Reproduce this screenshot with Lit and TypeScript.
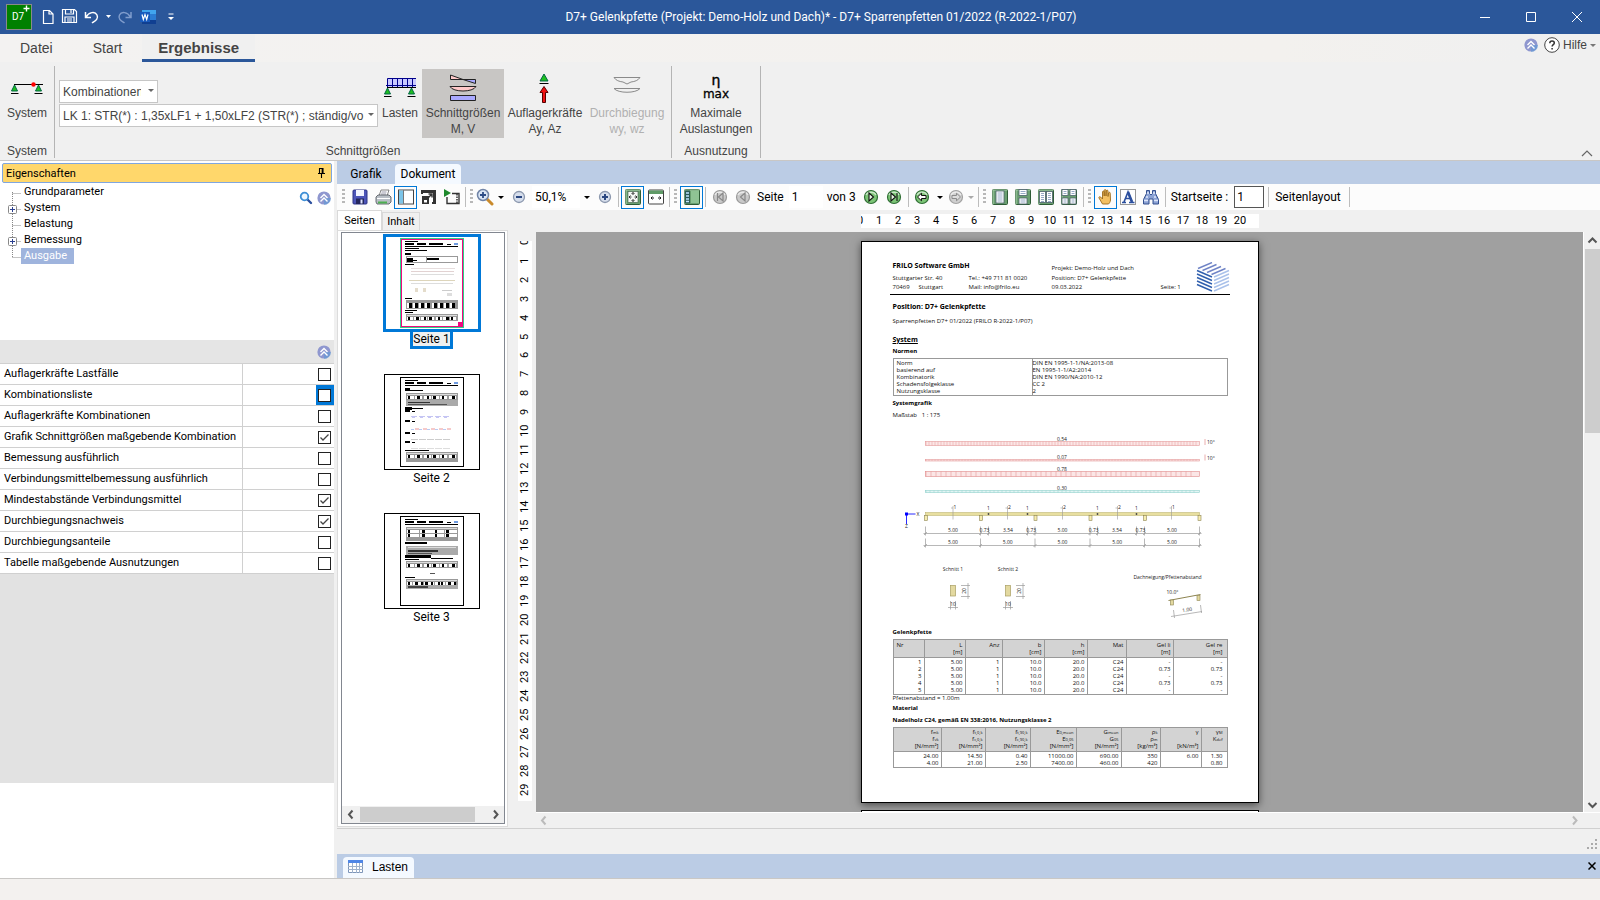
import { LitElement, html, svg, css, nothing } from "lit";
import { customElement } from "lit/decorators.js";
import { classMap } from "lit/directives/class-map.js";

const range = (n: number) => Array.from({ length: n }, (_, i) => i);

const support = (x: number, y: number) => svg`
  <path d="M${x} ${y}l-3 6h6z" fill="#1fc01f" stroke="#064" stroke-width="1"/>
  <path d="M${x - 4} ${y + 8.5}h8" stroke="#000"/>`;

const collapse = html`<svg class="ico" width="14" height="14" viewBox="0 0 14 14">
  <circle cx="7" cy="7" r="6.600" fill="#8f97cf"/><path d="M7 14A7 7 0 0 0 14 7L7 7z" fill="#5f9ad6" opacity=".6"/>
  <path d="M3.500 7L7 3.500 10.500 7M3.500 10.500L7 7l3.500 3.500" fill="none" stroke="#fff" stroke-width="1.400"/></svg>`;

const caret = (color = "#000") => html`<svg class="ico" width="6" height="3" viewBox="0 0 6 3"><path d="M0 0h6L3 3z" fill="${color}"/></svg>`;

const chev = (dir: string, color: string) => {
  const d: Record<string, string> = {
    left: "M7.500 1.500L4 5.500l3.500 4", right: "M4 1.500l3.500 4-3.500 4", up: "M1.500 7.500l4-4 4 4", down: "M1.500 4l4 4 4-4",
  };
  return html`<svg class="ico" width="11" height="11" viewBox="0 0 11 11"><path d="${d[dir]}" fill="none" stroke="${color}" stroke-width="2"/></svg>`;
};

const greenPage = (inner: unknown) => svg`
  <rect x="1.500" y="1.500" width="15" height="15" rx="1" fill="#6a9f70" stroke="#2e5c36"/>
  <path d="M2 16V2h14" fill="none" stroke="#a8d0aa"/>${inner}`;
const sheet = (x: number, y: number, w: number, h: number) => svg`
  <rect x="${x}" y="${y}" width="${w}" height="${h}" fill="#fff" stroke="#4a5f6a" stroke-width=".8"/>
  ${range(Math.floor((h - 1) / 2)).map((i) => svg`<path d="M${x + 1.5} ${y + 2 + i * 2}h${w - 3}" stroke="#7c93b8" stroke-width=".8"/>`)}`;
const ball = (fill: string, stroke: string, inner: unknown) => svg`
  <circle cx="9" cy="9" r="6.500" fill="${fill}" stroke="${stroke}" stroke-width="1.200"/>
  <path d="M4 7a5.500 4.500 0 0 1 10 0" fill="none" stroke="#fff" stroke-opacity=".6" stroke-width="1.500"/>${inner}`;

const glyphs: Record<string, unknown> = {
  save: svg`<rect x="2" y="2" width="14" height="14" rx="1" fill="#4d55b8" stroke="#2d3285"/><rect x="5" y="2" width="8" height="6" fill="#f2f4ff"/><rect x="5" y="10.500" width="8" height="5.500" fill="#23265c"/><rect x="9.500" y="11.500" width="2" height="4" fill="#dfe3ff"/>`,
  print: svg`<path d="M5 8l2-6h8l-2 6z" fill="#fff" stroke="#666" stroke-width=".8"/><path d="M7.500 4h5M7 6h5" stroke="#99a"/><path d="M2 9l2-2h11l2 2v5l-2 2H3l-1-2z" fill="#b9bfc6" stroke="#5b6168" stroke-width=".9"/><path d="M3 10.500h13" stroke="#fff"/><path d="M4 13.500h9v2H4z" fill="#4caf50"/>`,
  panel: svg`<rect x="1.500" y="2" width="15" height="14" fill="#fff" stroke="#444"/><rect x="2" y="2.500" width="4" height="13" fill="#7cc4e8"/><path d="M6.500 2v14" stroke="#777"/>`,
  expand: svg`<path d="M2 6V3h13v12h-3" fill="none" stroke="#333" stroke-width="2"/><path d="M1 2h15v3H1zM13 2h3v14h-3z" fill="#333"/><path d="M2 8h7v8H2z" fill="#333"/><path d="M4 12h3v2.500H4z" fill="#fff"/><path d="M7 11l5-5M8.500 6H12v3.500" fill="none" stroke="#333" stroke-width="1.400"/>`,
  film: svg`<path d="M1 1l7 4-7 4z" fill="#1f8a2d"/><path d="M9 5.500h7v10H4V9" fill="none" stroke="#333" stroke-width="1.400"/><path d="M14 6v10" stroke="#333" stroke-width="1.500" stroke-dasharray="1.500 1"/>`,
  zoom: svg`<path d="M10 10l6 6" stroke="#c98a2b" stroke-width="3" stroke-linecap="round"/><circle cx="7" cy="7" r="5.500" fill="#dbe6f5" stroke="#7184a6" stroke-width="1.500"/><path d="M7 4v6M4 7h6" stroke="#2d4c86" stroke-width="1.800"/>`,
  minus: svg`<circle cx="9" cy="9" r="5.500" fill="#d6deec" stroke="#8c98ae" stroke-width="1.300"/><path d="M6 9h6" stroke="#2b4780" stroke-width="2"/>`,
  plus: svg`<circle cx="9" cy="9" r="5.500" fill="#d6deec" stroke="#8c98ae" stroke-width="1.300"/><path d="M6 9h6M9 6v6" stroke="#2b4780" stroke-width="2"/>`,
  fitpage: greenPage(svg`<rect x="4" y="3.500" width="10" height="11" fill="#f4f8f4" stroke="#3c5c44" stroke-width=".6"/><path d="M9 4.500v2.500M9 11v2.500M5 9h2.500M10.500 9H13M7.500 6L9 4.500 10.500 6M7.500 12L9 13.500l1.500-1.500M6.500 7.500L5 9l1.500 1.500M11.500 7.500L13 9l-1.500 1.500" fill="none" stroke="#222" stroke-width=".9"/>`),
  fitwidth: svg`<rect x="1.500" y="2" width="15" height="14" rx="1" fill="#fff" stroke="#444"/><path d="M2 2.500h14v3.500H2z" fill="#5f9a66"/><path d="M4 10h3M11 10h3M5.500 8.500L4 10l1.500 1.500M12.500 8.500L14 10l-1.500 1.500" fill="none" stroke="#222"/>`,
  thumbs: greenPage(svg`<rect x="2" y="2.500" width="5" height="13" fill="#2b5a55"/><path d="M3 5h3M3 8h3M3 11h3M3 13.500h3" stroke="#bfe3ff" stroke-width="1.500"/><rect x="8" y="3" width="8" height="12" fill="#8fc394"/>`),
  first: ball("#c9c9c9", "#9a9a9a", svg`<path d="M6.500 5v8M12 5L7.500 9l4.500 4z" fill="none" stroke="#888" stroke-width="1.200"/>`),
  prev: ball("#c9c9c9", "#9a9a9a", svg`<path d="M11 5L6.500 9l4.500 4z" fill="none" stroke="#888" stroke-width="1.200"/>`),
  next: ball("#7cc576", "#2f6e34", svg`<path d="M7 5l4.500 4L7 13z" fill="#e9f8e6" stroke="#111" stroke-width="1.100"/>`),
  last: ball("#7cc576", "#2f6e34", svg`<path d="M6 5l4.500 4L6 13zM12 5v8" fill="#e9f8e6" stroke="#111" stroke-width="1.100"/>`),
  back: ball("#7cc576", "#2f6e34", svg`<path d="M4.500 9l4-3.800v2.300h4.500v3H8.500v2.300z" fill="#fff" stroke="#111" stroke-width="1"/>`),
  forward: ball("#cfcfcf", "#a2a2a2", svg`<path d="M13.500 9l-4-3.800v2.300H5v3h4.500v2.300z" fill="#ddd" stroke="#8c8c8c" stroke-width="1"/>`),
  single: greenPage(sheet(5, 3, 8, 12)),
  continuous: greenPage(svg`${sheet(5, 1.5, 8, 6)}${sheet(5, 10, 8, 6)}`),
  facing: greenPage(svg`${sheet(2.5, 3.5, 6, 11)}${sheet(9.5, 3.5, 6, 11)}`),
  grid: greenPage(svg`${sheet(2, 1.5, 6, 6)}${sheet(10, 1.5, 6, 6)}${sheet(2, 10, 6, 6)}${sheet(10, 10, 6, 6)}`),
  hand: svg`<path d="M5 16L1.500 10c-.5-1 .8-1.800 1.600-1L5 11V4c0-1.200 1.700-1.200 1.700 0v4V2.500c0-1.200 1.800-1.200 1.800 0V8l.3-5c0-1.200 1.700-1.200 1.700 0v5.500l.6-3.500c.2-1.100 1.800-.9 1.600.3L13 12c-.2 2-1 3-2 4z" transform="translate(1.500 0)" fill="#f3c063" stroke="#9a6a1c" stroke-width=".9"/>`,
  select: svg`<rect x="1.500" y="1.500" width="15" height="15" fill="#fff" stroke="#333" stroke-dasharray="1 1"/><path d="M3 14.500h4M10 14.500h5.500M5 14L9 4l4 10M6.500 10.500h5" fill="none" stroke="#2b4f9e" stroke-width="1.600"/><path d="M9 4l4 10" stroke="#2b4f9e" stroke-width="2.600"/>`,
  find: svg`<path d="M4.500 2.500h3v3L9 7l1.500-1.500v-3h3v3l3 6v4.500h-5.500v-5h-4v5H1.500v-4.500l3-6z" fill="#8ba2d4" stroke="#34508f"/><path d="M2 12.500h4M12 12.500h4M5 5h2M11 5h2M4 9h2M12 9h2" stroke="#dfe7fa" stroke-width="1.300"/>`,
};
const glyph = (name: string) => html`<svg class="ico" width="18" height="18" viewBox="0 0 18 18">${glyphs[name]}</svg>`;

const docStroke = "#999";

@customElement("report-drawing")
class ReportDrawing extends LitElement {
  static styles = css`
    :host { display: block; }
    svg { display: block; width: 100%; }
    text { font: 5px "Open Sans", sans-serif; fill: #222; text-anchor: middle; }
    .start { text-anchor: start; }
  `;

  private load(y: number, h: number, label: string, color: string, fill: string, step: number) {
    const n = Math.floor(274 / step);
    return svg`
      <text x="1062" y="${y - 1}">${label}</text>
      <rect x="925.500" y="${y}" width="274" height="${h}" fill="${fill}" stroke="${color}" stroke-width=".6"/>
      ${range(n).map((i) => svg`<path d="M${926 + i * step} ${y}v${h}" stroke="${color}" stroke-width=".5"/>`)}`;
  }

  private dims(y: number, marks: number[], labels: string[]) {
    return svg`
      <path d="M923.500 ${y}H1201.500" stroke="${docStroke}" stroke-width=".7"/>
      ${marks.map((x) => svg`<path d="M${x} ${y - 7}v9M${x - 1.5} ${y + 1.5}l3-3" stroke="${docStroke}" stroke-width=".7"/>`)}
      ${labels.map((t, i) => svg`<text x="${(marks[i] + marks[i + 1]) / 2}" y="${y - 2}">${t}</text>`)}`;
  }

  private section(x: number, n: number) {
    return svg`
      <text x="${x}" y="571">Schnitt ${n}</text>
      <rect x="${x - 2.5}" y="585.500" width="5" height="10.500" fill="#e3d9a0" stroke="#a89f62" stroke-width=".7"/>
      <path d="M${x + 15} 583v16M${x + 8} 585.500h9M${x + 8} 596.500h9M${x - 5} 607.500h10M${x - 2.5} 601v8.500M${x + 2.5} 601v8.500" stroke="${docStroke}" stroke-width=".7"/>
      <text transform="translate(${x + 13} 591) rotate(-90)">20</text>
      <text x="${x}" y="606">10</text>`;
  }

  render() {
    const piers = [925.5, 980.5, 1035, 1090, 1144.5, 1199];
    const hinges = [988.5, 1027.5, 1097.5, 1136.5];
    return html`<svg viewBox="862 420 396 205">
      ${this.load(441.5, 4, "0.54", "#e59a9a", "#fbe6e6", 3)}
      ${this.load(459.5, 1.5, "0.07", "#e59a9a", "#fbe6e6", 3)}
      ${this.load(471.5, 5, "0.78", "#e08a8a", "#fbe6e6", 5)}
      ${this.load(490.5, 2, "0.30", "#8fd0cc", "#e2f5f4", 4)}
      <path d="M1205 439v6M1205 454.500v6" stroke="#e59a9a" stroke-width=".8"/>
      <text class="start" x="1207" y="444">10°</text><text class="start" x="1207" y="460">10°</text>
      <path d="M906.500 524v-10h9" fill="none" stroke="#2a2aff"/><rect x="905" y="512.500" width="3" height="3" fill="#00f"/>
      <text x="918" y="516">X</text><text x="906.500" y="528">Z</text>
      <rect x="925.500" y="512.500" width="274" height="3" fill="#e8dfa0" stroke="#b5ab66" stroke-width=".5"/>
      ${piers.map((x) => svg`<rect x="${x - 1}" y="515.500" width="3" height="5" fill="#f7edb0" stroke="#8d8450" stroke-width=".6"/>`)}
      ${hinges.map((x) => svg`<circle cx="${x}" cy="514" r=".9" fill="#444"/><text x="${x}" y="510">1</text>`)}
      ${[[953, 1], [1007.5, 2], [1062.5, 2], [1117.5, 2], [1171.5, 1]].map(([x, n]) => svg`
        <path d="M${x} 506v13.500M${x - 2} 508h2" stroke="${docStroke}" stroke-width=".6"/><text x="${x + 2}" y="509">${n}</text>`)}
      ${this.dims(533.5, [925.5, 980.5, 988.5, 1027.5, 1035, 1090, 1097.5, 1136.5, 1144.5, 1199.5],
        ["5.00", "0.73", "3.54", "0.73", "5.00", "0.73", "3.54", "0.73", "5.00"])}
      ${this.dims(545.5, [925.5, 980.5, 1035, 1090, 1144.5, 1199.5], ["5.00", "5.00", "5.00", "5.00", "5.00"])}
      ${this.section(953, 1)}${this.section(1008, 2)}
      <text x="1167.500" y="578.500">Dachneigung/Pfettenabstand</text>
      <text x="1172.500" y="594">10.0°</text>
      <path d="M1168.500 600.500l32-6" stroke="#8d8450"/>
      <rect x="1170.500" y="600" width="3" height="5" fill="#e3d9a0" stroke="#8d8450" stroke-width=".6"/>
      <rect x="1197" y="595.500" width="3" height="5" fill="#e3d9a0" stroke="#8d8450" stroke-width=".6"/>
      <path d="M1171 616.500l31-5M1173.500 610l1 8M1200.500 605l1 8" stroke="${docStroke}" stroke-width=".7"/>
      <text transform="translate(1187.500 611.500) rotate(-9)">1.00</text>
    </svg>`;
  }
}

const normRows = [
  ["Norm", "DIN EN 1995-1-1/NA:2013-08"],
  ["basierend auf", "EN 1995-1-1/A2:2014"],
  ["Kombinatorik", "DIN EN 1990/NA:2010-12"],
  ["Schadensfolgeklasse", "CC 2"],
  ["Nutzungsklasse", "2"],
];
const purlinHead = [["Nr", ""], ["L", "[m]"], ["Anz", ""], ["b", "[cm]"], ["h", "[cm]"], ["Mat", ""], ["Gel li", "[m]"], ["Gel re", "[m]"]];
const purlinRows = range(5).map((i) => {
  const g = i % 2 ? "0.73" : "-";
  return [String(i + 1), "5.00", "1", "10.0", "20.0", "C24", g, g];
});
const materialHead: [string, string][][] = [
  [["f", "mk"], ["f", "vk"], ["[N/mm²]", ""]],
  [["f", "t,0,k"], ["f", "c,0,k"], ["[N/mm²]", ""]],
  [["f", "t,90,k"], ["f", "c,90,k"], ["[N/mm²]", ""]],
  [["E", "0,mean"], ["E", "0,05"], ["[N/mm²]", ""]],
  [["G", "mean"], ["G", "05"], ["[N/mm²]", ""]],
  [["ρ", "k"], ["ρ", "m"], ["[kg/m³]", ""]],
  [["γ", ""], ["\u00a0", ""], ["[kN/m³]", ""]],
  [["γ", "M"], ["K", "def"], ["\u00a0", ""]],
];
const materialRows = [
  ["24.00", "14.50", "0.40", "11000.00", "690.00", "350", "6.00", "1.30"],
  ["4.00", "21.00", "2.50", "7400.00", "460.00", "420", "", "0.80"],
];
const purlinCols = [30, 41, 37, 42, 43, 39, 47, 54];
const materialCols = [47, 44, 45, 46, 45, 39, 41, 26];

@customElement("report-page")
class ReportPage extends LitElement {
  static styles = css`
    :host {
      display: block; box-sizing: border-box; width: 398px; height: 562px; background: #fff; border: 1px solid #000;
      box-shadow: 0 2px 8px #0008; font: 6px/7px "Open Sans", sans-serif; color: #111; padding: 20px 0 0;
    }
    .head { display: grid; grid-template-columns: 26px 50px 83px 109px 1fr; grid-template-rows: 12px 9px 9px;
      align-items: center; margin: 0 28px; padding: 0 0 2px 3px; border-bottom: 1px solid #000; position: relative; }
    .firm { grid-column: 1 / 4; font-size: 7px; line-height: 8px; font-weight: 700; color: #000; align-self: start; }
    .street { grid-column: 1 / 3; }
    .c3 { grid-column: 3; } .c4 { grid-column: 4; } .wide { grid-column: 4 / 6; }
    .logo { position: absolute; right: 0; top: 0; width: 34px; height: 30px; }
    .body { margin: 0 31px; }
    .b { font-weight: 700; color: #000; line-height: 10px; }
    .line { line-height: 10px; margin-top: 2px; }
    .pos { margin-top: 7px; font-size: 7px; }
    .prog { margin-top: 4px; }
    .sys { margin-top: 8px; line-height: 11px; font-size: 7px; text-decoration: underline; }
    .after { margin-top: 1px; }
    .gap { margin-top: 2px; }
    table { width: 335px; table-layout: fixed; border-collapse: separate; border-spacing: 0; border: 1px solid #999; margin-top: 2px; }
    td, th { padding: 0 2px 0 0; text-align: right; font-weight: 400; border-left: 1px solid #999; height: 7px; white-space: nowrap; }
    td:first-child, th:first-child { border-left: 0; }
    td:last-child, th:last-child { padding-right: 4px; }
    th { background: #d3d3d3; border-bottom: 1px solid #999; padding: 2px 2px 1px 0; vertical-align: top; }
    tbody tr:first-child td { padding-top: 1px; }
    .norms td { text-align: left; }
    .norms td:first-child { padding-left: 3px; width: 133px; }
    th.left { text-align: left; padding-left: 3px; }
    sub { font-size: 4px; line-height: 0; vertical-align: baseline; }
    .mat th { padding-top: 1px; }
  `;

  private table(cls: string, cols: number[], head: unknown, rows: string[][]) {
    return html`<table class=${cls}>
      <colgroup>${cols.map((w) => html`<col width=${w}>`)}</colgroup>
      <thead><tr>${head}</tr></thead>
      <tbody>${rows.map((r) => html`<tr>${r.map((c) => html`<td>${c}</td>`)}</tr>`)}</tbody>
    </table>`;
  }

  render() {
    return html`
      <header class="head">
        <div class="firm">FRILO Software GmbH</div><div class="wide">Projekt: Demo-Holz und Dach</div>
        <div class="street">Stuttgarter Str. 40</div><div class="c3">Tel.: +49 711 81 0020</div><div class="wide">Position: D7+ Gelenkpfette</div>
        <div>70469</div><div>Stuttgart</div><div class="c3">Mail: info@frilo.eu</div><div class="c4">09.03.2022</div><div>Seite: 1</div>
        <svg class="logo" viewBox="0 0 34 30" fill="none" stroke-width="1.400">
          ${range(5).map((i) => svg`<path d="M1 ${8.5 + i * 3.5}l15 6.500" stroke="#2f5fae"/><path d="M18 ${15 + i * 3.5}l15-6.500" stroke="#a9c1ea"/>`)}
          ${range(4).map((i) => svg`<path d="M${2 + i * 4.5} ${6.5 + i * 2}l14-6" stroke="#6f83c6"/>`)}
        </svg>
      </header>
      <div class="body">
        <div class="b pos">Position: D7+ Gelenkpfette</div>
        <div class="line prog">Sparrenpfetten D7+ 01/2022 (FRILO R-2022-1/P07)</div>
        <div class="b sys">System</div>
        <div class="b after">Normen</div>
        <table class="norms"><tbody>${normRows.map((r) => html`<tr><td>${r[0]}</td><td>${r[1]}</td></tr>`)}</tbody></table>
        <div class="b gap">Systemgrafik</div>
        <div class="line">Maßstab &nbsp; 1 : 175</div>
      </div>
      <report-drawing></report-drawing>
      <div class="body">
        <div class="b gap">Gelenkpfette</div>
        ${this.table("purlins", purlinCols, purlinHead.map((h, i) => html`<th class=${i ? "" : "left"}>${h[0]}<br>${h[1]}</th>`), purlinRows)}
        <div>Pfettenabstand = 1.00m</div>
        <div class="b after">Material</div>
        <div class="b gap">Nadelholz C24, gemäß EN 338:2016, Nutzungsklasse 2</div>
        ${this.table("mat", materialCols, materialHead.map((h) => html`<th>${h.map(([a, s]) => html`<div>${a}${s ? html`<sub>${s}</sub>` : nothing}</div>`)}</th>`), materialRows)}
      </div>`;
  }
}

type Mark = [number, number, number, number, string];
const k = "#000", g = "#999";
const header: Mark[] = [
  [4, 2, 13, 1, k], [4, 4, 9, 2, k], [16, 4, 9, 2, k], [28, 4, 14, 2, k], [46, 5, 4, 1, k], [53, 4, 4, 2, "#6f9be0"], [4, 7, 53, 1, k],
];
const band = (y: number, h: number, rows: number, cells: number): Mark[] => [
  [5, y, 52, h, g], [6, y + 1, 50, 1, "#ddd"],
  ...range(rows).flatMap((r) => range(cells).flatMap((c): Mark[] => [
    [6 + Math.round((c * 50) / cells), y + 3 + r * 4, Math.round(50 / cells) - 1, 3, "#fff"],
    [7 + Math.round((c * 50) / cells) + (c % 3), y + 3 + r * 4, c % 2 ? 3 : 2, 3, k],
  ])),
];
const pageMarks: Mark[][] = [
  [...header, [4, 9, 14, 1, k], [4, 11, 22, 1, k], [4, 14, 6, 2, k], [5, 17, 52, 7, g], [6, 18, 50, 5, "#fff"], [6, 19, 6, 4, k], [12, 21, 4, 1, k], [25, 18, 1, 5, g], [26, 19, 12, 2, k],
    [4, 25, 9, 1, k], [10, 29, 44, 1, "#e6dddd"], [10, 32, 43, 1, "#e2d2d2"], [10, 35, 43, 1, "#ddd"], [8, 41, 46, 1, "#ddd5bb"], [10, 44, 42, 1, "#ddd"],
    [14, 49, 3, 4, "#e4dccb"], [22, 49, 3, 4, "#e4dccb"], [41, 51, 10, 1, "#ccc"], [46, 54, 5, 3, "#ddd"],
    [4, 59, 7, 1, k], [5, 61, 52, 9, g], ...range(8).flatMap((i): Mark[] => [[6 + i * 6 + (i > 3 ? 1 : 0), 64, 5, 5, "#fff"], [8 + i * 6 + (i > 3 ? 1 : 0), 64, 3, 5, k]]),
    [4, 71, 12, 1, k], [4, 73, 8, 1, k], ...band(75, 7, 1, 7)],
  [...header, [4, 10, 5, 2, k], [4, 12, 18, 1, k], ...band(15, 7, 1, 6), [5, 22, 52, 6, "#aaa"], [7, 24, 22, 1, "#333"], [7, 26, 39, 1, "#555"],
    ...[32, 42, 54, 63].map((y): Mark => [4, y, 5, 2, k]), ...[33, 43, 55, 64].map((y): Mark => [11, y, 3, 1, k]), [4, 29, 7, 3, k], [4, 30, 18, 1, k],
    ...range(5).flatMap((i): Mark[] => [[10 + i * 8, 38, 6, 1, "#c5c5f3"], [11 + i * 8, 39, 3, 1, "#c5c5f3"], [10 + i * 8, 51, 3, 1, "#b9c9f3"], [14 + i * 8, 50, 4, 2, "#f6caca"], [10 + i * 8, 61, 7, 1, "#ccc"], [10 + i * 8, 70, 7, 1, "#ddd"]]),
    [4, 72, 24, 1, k], ...band(74, 10, 1, 6)],
  [...header, ...band(10, 14, 2, 4), [4, 25, 22, 2, k], [5, 29, 52, 9, "#aaa"], [7, 30, 48, 1, "#ddd"], [7, 33, 30, 2, "#333"], [7, 36, 24, 1, "#555"], [4, 38, 26, 3, k], [30, 41, 22, 1, k], [4, 42, 14, 1, k],
    ...band(44, 7, 1, 6), [29, 56, 5, 1, "#555"], [4, 60, 10, 1, k], ...band(62, 6, 1, 9), [5, 68, 52, 4, "#aaa"], [7, 69, 20, 2, "#444"]],
];

const treeItems = [
  { label: "Grundparameter" }, { label: "System", open: true }, { label: "Belastung" }, { label: "Bemessung", open: true }, { label: "Ausgabe", selected: true },
] as { label: string; open?: boolean; selected?: boolean }[];

const options = [
  { label: "Auflagerkräfte Lastfälle" }, { label: "Kombinationsliste", focus: true }, { label: "Auflagerkräfte Kombinationen" },
  { label: "Grafik Schnittgrößen maßgebende Kombination", on: true }, { label: "Bemessung ausführlich" },
  { label: "Verbindungsmittelbemessung ausführlich" }, { label: "Mindestabstände Verbindungsmittel", on: true },
  { label: "Durchbiegungsnachweis", on: true }, { label: "Durchbiegungsanteile" }, { label: "Tabelle maßgebende Ausnutzungen" },
] as { label: string; on?: boolean; focus?: boolean }[];

@customElement("app-root")
class AppRoot extends LitElement {
  static styles = css`
    :host { display: flex; flex-direction: column; height: 100vh; overflow: hidden; background: #f0f0f0; color: #000;
      font: 12px "Liberation Sans", Arial, sans-serif; }
    * { box-sizing: border-box; }
    button { font: inherit; color: inherit; border: 0; background: none; padding: 0; margin: 0; }
    .ico { display: block; flex: none; }
    .ui { font-family: Roboto, "Open Sans", sans-serif; }

    .title { flex: none; display: flex; align-items: center; height: 34px; background: #2b579a; color: #fff; position: relative; }
    .quick { display: flex; align-items: center; padding-left: 6px; gap: 1px; }
    .quick svg { display: block; }
    .caption { position: absolute; left: 0; right: 0; text-align: center; padding-left: 42px; pointer-events: none; font-size: 12px; }
    .window { margin-left: auto; display: flex; }
    .window button { width: 46px; height: 34px; display: grid; place-items: center; }

    .tabs { flex: none; display: flex; height: 28px; background: linear-gradient(90deg, #f3f2f1, #f3f1ee 80%, #f0f0f0 95%); color: #444; font-size: 14px; }
    .tabs button { padding: 0 20px; height: 28px; }
    .tabs .active { font-weight: 700; font-size: 15px; padding: 2px 16px 0; border-bottom: 3px solid #2b579a; background: #f0f0f0; }
    .help { margin-left: auto; display: flex; align-items: center; gap: 6px; font-size: 12px; padding: 0 4px 6px 0; }
    .tabs .help button { display: flex; align-items: center; gap: 3px; padding: 0; height: 20px; }

    .ribbon { flex: none; display: flex; padding-top: 4px; height: 99px; border-bottom: 1px solid #c9c7c5; color: #444; }
    .group { display: flex; flex-direction: column; gap: 6px; padding-top: 3px; height: 92px; border-right: 1px solid #b4b4b4; }
    .group .body { display: flex; flex: none; height: 69px; }
    .group .name { text-align: center; line-height: 14px; }
    .group .wide { padding-right: 3px; }
    .cmd { display: flex; flex-direction: column; align-items: center; padding-top: 3px; line-height: 16px; white-space: nowrap; }
    .cmd svg { height: 32px; width: 32px; margin-bottom: 1px; display: block; }
    .cmd.pressed { background: #c8c6c4; }
    .cmd:disabled { color: #b1b1b1; }
    .w54 { width: 54px; } .w44 { width: 44px; } .w82 { width: 82px; } .w88 { width: 88px; }
    .combos { display: flex; flex-direction: column; align-items: flex-start; gap: 1px; padding: 11px 0 0 4px; }
    .combo { position: relative; width: 319px; height: 23px; }
    .combo.small { width: 99px; }
    .combo select { appearance: none; width: 100%; height: 100%; border: 1px solid #c6c6c6; border-radius: 0; background: #fff; color: #444; font: inherit; padding: 0 8px 0 3px; }
    .combo.small select { padding-right: 16px; }
    .combo svg { position: absolute; right: 4px; top: 9px; pointer-events: none; }
    .fold { margin: auto 7px 3px auto; }

    .work { flex: 1; display: flex; min-height: 0; gap: 3px; }
    .side { width: 334px; flex: none; display: flex; flex-direction: column; background: #fff; font-size: 11px; font-family: Roboto, sans-serif; }
    .panelhead { display: flex; align-items: center; justify-content: space-between; height: 20px; margin: 2px 2px 1px; padding: 0 5px 0 3px;
      border: 1px solid #7fa6e0; border-radius: 2px; background: #ffd76b; }
    .treebox { display: flex; justify-content: space-between; height: 156px; padding: 0 3px 0 8px; }
    .treebox .tools { display: flex; gap: 4px; padding-top: 7px; }
    ul { list-style: none; margin: 0; padding: 0; }
    .tree li { display: flex; align-items: center; height: 16px; }
    .tree li svg { display: block; flex: none; }
    .tree span { line-height: 16px; padding: 0 7px 0 3px; }
    .tree .sel span { background: #9fb4dd; color: #fff; }
    .strip { height: 23px; background: #e5e5e5; display: flex; align-items: center; justify-content: flex-end; padding-right: 3px; }
    .options { border-top: 1px solid #d0d0d0; }
    .options li { display: flex; height: 21px; border-bottom: 1px solid #d0d0d0; }
    .options label { width: 243px; padding-left: 4px; line-height: 20px; border-right: 1px solid #d0d0d0; white-space: nowrap; }
    .options .cell { margin-left: auto; width: 18px; display: flex; align-items: center; padding-left: 2px; }
    .options .focus { background: #0078d7; }
    .options input { appearance: none; width: 13px; height: 13px; margin: 0; border: 1px solid #222; background: #fff; }
    .options input:checked { background: #fff url("data:image/svg+xml,%3Csvg xmlns='http://www.w3.org/2000/svg' viewBox='0 0 11 11'%3E%3Cpath d='M1.500 5.500L4 8l5.500-5.500' fill='none' stroke='%23444' stroke-width='1.300'/%3E%3C/svg%3E"); }
    .filler { flex: 0 0 209px; background: #e2e2e2; }

    .main { flex: 1; min-width: 0; display: flex; flex-direction: column; }
    .doctabs { flex: none; display: flex; align-items: flex-end; height: 23px; background: #bbcce5; }
    .doctabs button { height: 20px; width: 58px; line-height: 20px; }
    .doctabs .active { width: 66px; background: #f4f9ff; border-radius: 4px 4px 0 0; }
    .bar { flex: none; display: flex; align-items: center; height: 26px; background: #fcfcfc; padding-left: 3px; white-space: nowrap; }
    .bar button { width: 23px; height: 23px; display: grid; place-items: center; flex: none; }
    .bar .on { border: 1px solid #0078d7; }
    .bar .zoomer { width: 18px; }
    .bar .snug { width: 19px; }
    .bar .drop { width: 13px; }
    .bar .tight { width: 10px; }
    .grip { width: 3px; height: 16px; margin: 0 3px 0 2px; background: repeating-linear-gradient(#b8b8b8 0 2px, transparent 2px 4px); }
    .sep { width: 1px; height: 20px; margin: 0 2px; background: #bdbdbd; }
    .bar input { border: 0; background: #fff; height: 22px; padding: 0 3px; font: inherit; color: #000; outline: 0; }
    .bar .zoomval { width: 48px; margin-left: 2px; }
    .bar .pageno { width: 34px; margin: 0 4px 0 5px; }
    .bar .startno { width: 30px; border: 1px solid #555; padding: 0 2px; margin: 0 2px 0 6px; }
    .bar label { padding-left: 3px; }
    .bar .total { padding-right: 4px; }
    .bar .layout { width: auto; padding: 0 6px 0 4px; }

    .doc { flex: 1; display: flex; min-height: 0; border-bottom: 1px solid #d0d0d0; }
    .pages { width: 171px; flex: none; display: flex; flex-direction: column; padding-bottom: 1px; }
    .minitabs { display: flex; align-items: flex-end; height: 20px; font-size: 11px; font-family: Roboto, sans-serif; }
    .minitabs button { height: 18px; width: 38px; border: 1px solid #d9d9d9; border-bottom: 0; background: #f0f0f0; }
    .minitabs .active { height: 20px; width: 45px; background: #fff; }
    .frame { flex: 1; min-height: 0; background: #fff; border: 1px solid #dcdcdc; padding: 1px 2px 2px 3px; display: flex; }
    .list { flex: 1; border: 1px solid #828790; display: flex; flex-direction: column; min-height: 0; min-width: 0; }
    .thumbs { flex: 1; overflow: hidden; padding: 1px 0 0 17px; display: flex; flex-direction: column; align-items: center; gap: 25px; }
    .thumb { display: flex; flex-direction: column; align-items: center; height: 114px; width: 98px; font-size: 12px; font-family: Roboto, sans-serif; }
    .thumb .edge { width: 96px; height: 96px; margin-top: 1px; border: 1px solid #000; display: grid; place-items: center; flex: none; }
    .thumb svg { display: block; outline: 1px solid #000; }
    .thumb .no { line-height: 16px; white-space: nowrap; }
    .thumb.cur .edge { width: 98px; height: 98px; margin: 0; border: 3px solid #0078d7; }
    .thumb.cur .no { border: 3px solid #0078d7; background: #f0f0f0; margin-top: -3px; line-height: 14px; }
    .thumb.cur svg { outline-color: #2fd08a; }
    .hscroll { flex: none; height: 17px; display: flex; align-items: center; background: #f0f0f0; padding: 0 3px; justify-content: space-between; }
    .hscroll .knob { width: 115px; height: 15px; background: #cdcdcd; margin-right: 12px; }
    .vruler { flex: none; width: 14px; margin: 31px 4px 27px 10px; background: #fff; overflow: hidden; font-size: 11px; }
    .vruler div { display: flex; flex-direction: column; height: 567px; margin-top: -9px; }
    .vruler span { flex: 1; writing-mode: vertical-rl; transform: rotate(180deg); text-align: center; line-height: 14px; }
    .view { flex: 1; min-width: 0; display: flex; flex-direction: column; }
    .hruler { flex: none; margin: 4px 17px 4px 0; height: 14px; display: flex; justify-content: center; font-size: 11px; }
    .hruler .win { width: 398px; background: #fff; overflow: hidden; }
    .hruler .win div { display: flex; margin-left: -10px; }
    .hruler span { flex: none; width: 19px; text-align: center; line-height: 14px; }
    .rule { font-family: Roboto, sans-serif; }
    .canvasrow { flex: 1; display: flex; min-height: 0; }
    .canvas { flex: 1; background: #a0a0a0; overflow: hidden; display: flex; flex-direction: column; align-items: center; gap: 7px; padding-top: 9px; }
    .canvas > * { flex: none; }
    .nextpage { width: 398px; height: 20px; background: #fff; border: 1px solid #000; }
    .vscroll { width: 17px; display: flex; flex-direction: column; align-items: center; border-left: 1px solid #fff; padding: 3px 0 2px; }
    .vscroll .knob { width: 15px; height: 184px; background: #cdcdcd; margin: 3px 0 auto; }
    .viewfoot { flex: none; height: 16px; display: flex; align-items: center; justify-content: space-between; border-top: 1px solid #fff; padding: 0 20px 0 2px; }
    .below { flex: none; height: 25px; display: flex; align-items: flex-end; justify-content: flex-end; padding: 4px 2px; }
    .bottomtabs { flex: none; height: 24px; background: #bbcce5; display: flex; align-items: flex-end; justify-content: space-between; padding: 0 4px 0 6px; }
    .bottomtabs .tab { height: 21px; width: 71px; background: #f4f9ff; border-radius: 4px 4px 0 0; display: flex; align-items: center; gap: 9px; padding: 0 0 2px 5px; }
    .bottomtabs .close { height: 24px; }
    .status { flex: none; height: 22px; background: #f3f1ef; border-top: 1px solid #c9c7c5; }
  `;

  private tool(name: string, label: string, cls = "") {
    return html`<button class=${cls} aria-label=${label}>${glyph(name)}</button>`;
  }

  private titleBar() {
    return html`<header class="title ui">
      <div class="quick">
        <svg width="26" height="26" viewBox="0 0 26 26"><rect x=".5" y=".5" width="25" height="25" fill="#008000" stroke="#8a8a8a"/><path d="M17.500 4.500h6M20.500 1.500v6" stroke="#fff" stroke-width="1.400"/><text x="6" y="16" fill="#fff" font-size="10" font-family="Roboto">D7</text></svg>
        <svg width="134" height="18" viewBox="33 8 134 18" fill="none" stroke="#fff" stroke-width="1.200">
          <path d="M43.500 10.500h6l3.500 3.500v9.500h-9.500zM49 10.500V14h4"/>
          <path d="M62.500 9.500h12l2 2v11h-14zM65.500 9.500v4.500h8V9.500M65 22.500V17h9v5.500M67 19h5M67 21h5M71 10v3"/>
          <path d="M85.500 12v5.500H91M86 17c3-5 9-6 11-2s-2 6-5 8" stroke-width="1.500"/>
          <path d="M106 15h5l-2.500 3z" fill="#fff" stroke="none"/>
          <path d="M131 12v5.500h-5.500M130.500 17c-3-5-9-6-11-2s2 6 5 8" stroke="#7f9ccc" stroke-width="1.500"/>
          <path d="M142 10h14v14h-14z" fill="#2b7cd3" stroke="none"/><path d="M142 10h14v4h-14z" fill="#41a5ee" stroke="none"/><path d="M142 20h14v4h-14z" fill="#103f91" stroke="none"/><rect x="140" y="12" width="10" height="10" fill="#185abd" stroke="none"/><path d="M142 14.500l1.300 5 1.700-5 1.700 5 1.300-5"/>
        </svg>
        <svg width="6" height="8" viewBox="0 0 6 8"><path d="M.5 1h5" stroke="#fff"/><path d="M0 4h6L3 7z" fill="#fff"/></svg>
      </div>
      <div class="caption">D7+ Gelenkpfette (Projekt: Demo-Holz und Dach)* - D7+ Sparrenpfetten 01/2022 (R-2022-1/P07)</div>
      <div class="window">
        <button aria-label="Minimieren"><svg width="10" height="10"><path d="M0 5.500h10" stroke="#fff"/></svg></button>
        <button aria-label="Maximieren"><svg width="10" height="10"><path d="M.5 .5h9v9h-9z" fill="none" stroke="#fff"/></svg></button>
        <button aria-label="Schließen"><svg width="10" height="10"><path d="M0 0l10 10M10 0L0 10" stroke="#fff"/></svg></button>
      </div>
    </header>
    <nav class="tabs">
      <button>Datei</button><button>Start</button><button class="active">Ergebnisse</button>
      <div class="help"><button aria-label="Einklappen">${collapse}</button>
        <button><svg width="16" height="16" viewBox="0 0 16 16"><circle cx="8" cy="8" r="7.300" fill="#fff" stroke="#444"/><path d="M5.800 6.200c0-3 4.500-2.800 4.500-.2 0 1.600-2.200 1.800-2.200 3.500M8.100 11v1.500" fill="none" stroke="#333" stroke-width="1.500"/></svg>Hilfe ${caret("#777")}</button>
      </div>
    </nav>`;
  }

  private ribbon() {
    return html`<section class="ribbon">
      <div class="group">
        <div class="body"><button class="cmd w54"><svg viewBox="0 0 32 32"><path d="M3 12.500h29" stroke="#000"/>${support(3.5, 13)}${support(27.5, 13)}<circle cx="22.500" cy="12.500" r="2.200" fill="red"/></svg>System</button></div>
        <div class="name">System</div>
      </div>
      <div class="group">
        <div class="body wide">
          <div class="combos">
            <div class="combo small"><select aria-label="Auswahlart"><option>Kombinationen</option></select>${caret("#666")}</div>
            <div class="combo"><select aria-label="Lastkombination"><option>LK 1: STR(*) : 1,35xLF1 + 1,50xLF2 (STR(*) ; ständig/vo</option></select>${caret("#666")}</div>
          </div>
          <button class="cmd w44"><svg viewBox="0 0 32 32"><rect x="3" y="6.500" width="29" height="9" fill="#c9c9ff"/><path d="M3.500 15V6.500H32M8.500 7v8M13.500 7v8M18.500 7v8M23.500 7v8M28.500 7v8M2 13.500h30" stroke="#00008b" fill="none"/><path d="M3 15.500h29" stroke="#000"/>${support(3.5, 16)}${support(27.5, 16)}</svg>Lasten</button>
          <button class="cmd pressed w82"><svg viewBox="0 0 32 32" stroke="#222"><path d="M3.500 7.500V3L16 7.500z" fill="#ffc9c9"/><path d="M16 7.500h12.500v4z" fill="#a9a9ff"/><path d="M3 14.500h26c-3 6-23 6-26 0z" fill="#ffc9c9"/><path d="M3.500 23.500h25v5h-25z" fill="#a9a9ff"/></svg>Schnittgrößen<br>M, V</button>
          <button class="cmd w82"><svg viewBox="0 0 32 32"><path d="M15 2l-4 7h8z" fill="#1fc01f" stroke="#064"/><path d="M10.500 11.500h9" stroke="#000"/><path d="M15 14.500l-4 6h2.500v10h3v-10H19z" fill="#f01010" stroke="#500"/></svg>Auflagerkräfte<br>Ay, Az</button>
          <button class="cmd w82" disabled><svg viewBox="0 0 32 32" fill="none" stroke="#8a8a8a"><path d="M3 5.500h26c-2 3-5 4-9 4.500l-4 2-4-2C8 9.500 5 8.500 3 5.500zM3 16.500h26c-4 5-22 5-26 0z"/></svg>Durchbiegung<br>wy, wz</button>
        </div>
        <div class="name">Schnittgrößen</div>
      </div>
      <div class="group">
        <div class="body"><button class="cmd w88"><svg viewBox="0 0 32 32"><text x="16" y="13" text-anchor="middle" font-size="14" font-family="DejaVu Sans" stroke="#000" stroke-width=".4">η</text><text x="16" y="26" text-anchor="middle" font-size="12" font-family="DejaVu Sans" stroke="#000" stroke-width=".3">max</text></svg>Maximale<br>Auslastungen</button></div>
        <div class="name">Ausnutzung</div>
      </div>
      <button class="fold" aria-label="Menüband einklappen"><svg class="ico" width="12" height="7"><path d="M1 6l5-5 5 5" fill="none" stroke="#666" stroke-width="1.200"/></svg></button>
    </section>`;
  }

  private side() {
    return html`<aside class="side">
      <div class="panelhead">Eigenschaften
        <svg width="9" height="10" viewBox="0 0 9 10"><path d="M2.500 0v5.500M2 .5h4.500M6 0v5.500M1 5.500h7M4.500 6v4M5.200 0v6" stroke="#000" stroke-width="1.100" fill="none"/></svg></div>
      <div class="treebox">
        <ul class="tree">${treeItems.map((t, i) => html`<li class=${classMap({ sel: !!t.selected })}>
          <svg width="13" height="16" viewBox="0 0 13 16" fill="none">
            <path d="M4.500 ${i ? 0 : 8}V${i === 4 ? 9 : 16}M4.500 9.500H13" stroke="#888" stroke-dasharray="1 1"/>
            ${t.open ? svg`<rect x=".5" y="5.500" width="8" height="8" rx="1" fill="#fff" stroke="#888"/><path d="M2 9.500h5M4.500 7v5" stroke="#2b3f8f"/>` : nothing}
          </svg><span>${t.label}</span></li>`)}</ul>
        <div class="tools"><svg width="14" height="14" viewBox="0 0 14 14"><path d="M8 8l4 4" stroke="#2b4f9e" stroke-width="2.400" stroke-linecap="round"/><circle cx="5.500" cy="5.500" r="3.800" fill="#eef7ff" stroke="#3d8fd6" stroke-width="1.800"/></svg>${collapse}</div>
      </div>
      <div class="strip">${collapse}</div>
      <ul class="options">${options.map((o, i) => html`<li><label for="o${i}">${o.label}</label>
        <div class=${classMap({ cell: true, focus: !!o.focus })}><input id="o${i}" type="checkbox" .checked=${!!o.on}></div></li>`)}</ul>
      <div class="filler"></div>
    </aside>`;
  }

  private toolbar() {
    const grip = html`<div class="grip"></div>`, sep = html`<div class="sep"></div>`;
    const drop = (label: string, c = "#000", cls = "drop") => html`<button class=${cls} aria-label=${label}>${caret(c)}</button>`;
    return html`<div class="bar ui">
      ${grip}${this.tool("save", "Speichern")}${this.tool("print", "Drucken")}${this.tool("panel", "Seitenleiste", "on")}${this.tool("expand", "Vollbild")}${this.tool("film", "Export")}
      ${sep}${grip}${this.tool("zoom", "Zoom", "zoomer")}${drop("Zoomwerkzeuge")}${this.tool("minus", "Verkleinern")}
      <input class="zoomval" aria-label="Zoomfaktor" value="50,1%">${drop("Zoomstufen")}${this.tool("plus", "Vergrößern")}
      ${sep}${this.tool("fitpage", "Ganze Seite", "on")}${this.tool("fitwidth", "Seitenbreite")}
      ${sep}${grip}${this.tool("thumbs", "Miniaturen", "on")}${sep}${this.tool("first", "Erste Seite")}${this.tool("prev", "Vorherige Seite")}
      <label for="pg">Seite</label><input id="pg" class="pageno" value="1"><span class="total">von 3</span>
      ${this.tool("next", "Nächste Seite")}${this.tool("last", "Letzte Seite")}${sep}${this.tool("back", "Zurück")}${drop("Verlauf zurück")}${this.tool("forward", "Vor", "snug")}${drop("Verlauf vor", "#aaa", "tight")}
      ${sep}${grip}${this.tool("single", "Einzelseite")}${this.tool("continuous", "Fortlaufend")}${this.tool("facing", "Doppelseite")}${this.tool("grid", "Doppelseite fortlaufend")}
      ${sep}${grip}${this.tool("hand", "Verschieben", "on")}${this.tool("select", "Textauswahl")}${this.tool("find", "Suchen")}
      ${sep}<label for="st">Startseite :</label><input id="st" class="startno" value="1">${sep}<button class="layout">Seitenlayout</button>${sep}
    </div>`;
  }

  private thumb(i: number) {
    return html`<div class=${classMap({ thumb: true, cur: i === 0 })}>
      <div class="edge"><svg width="62" height="88" viewBox="0 0 62 88" shape-rendering="crispEdges">
        ${pageMarks[i].map(([x, y, w, h, c]) => svg`<rect x="${x}" y="${y}" width="${w}" height="${h}" fill="${c}"/>`)}
        ${i === 0 ? svg`<rect x=".5" y=".5" width="61" height="87" fill="none" stroke="#f0087f"/><rect x="57" y="83" width="5" height="5" fill="#f0087f"/>` : nothing}
      </svg></div><div class="no">Seite ${i + 1}</div></div>`;
  }

  render() {
    return html`${this.titleBar()}${this.ribbon()}
      <div class="work">
        ${this.side()}
        <main class="main">
          <nav class="doctabs ui"><button>Grafik</button><button class="active">Dokument</button></nav>
          ${this.toolbar()}
          <div class="doc">
            <div class="pages">
              <div class="minitabs"><button class="active">Seiten</button><button>Inhalt</button></div>
              <div class="frame"><div class="list">
                <div class="thumbs">${range(3).map((i) => this.thumb(i))}</div>
                <div class="hscroll">${chev("left", "#555")}<div class="knob"></div>${chev("right", "#555")}</div>
              </div></div>
            </div>
            <div class="vruler rule"><div>${range(30).map((n) => html`<span>${n}</span>`)}</div></div>
            <div class="view">
              <div class="hruler rule"><div class="win"><div>${range(21).map((n) => html`<span>${n}</span>`)}</div></div></div>
              <div class="canvasrow">
                <div class="canvas"><report-page></report-page><div class="nextpage"></div></div>
                <div class="vscroll">${chev("up", "#555")}<div class="knob"></div>${chev("down", "#555")}</div>
              </div>
              <div class="viewfoot">${chev("left", "#bbb")}${chev("right", "#bbb")}</div>
            </div>
          </div>
          <div class="below"><svg width="11" height="11" fill="#aaa">${[[8, 0], [4, 4], [8, 4], [0, 8], [4, 8], [8, 8]].map(([x, y]) => svg`<rect x="${x}" y="${y}" width="2" height="2"/>`)}</svg></div>
          <div class="bottomtabs"><button class="tab"><svg class="ico" width="15" height="13" viewBox="0 0 15 13"><path d="M.5.5h14v12H.5z" fill="#fff" stroke="#7d95b8"/><path d="M0 0h15v3H0z" fill="#4f86e6"/><path d="M0 6.500h15M0 9.500h15M4.500 3v10M8.500 3v10M11.500 3v10" stroke="#9fb2cc"/></svg>Lasten</button>
            <button class="close" aria-label="Schließen"><svg class="ico" width="8" height="8"><path d="M.5.5l7 7M7.500.5l-7 7" stroke="#000" stroke-width="1.500"/></svg></button></div>
        </main>
      </div>
      <footer class="status"></footer>`;
  }
}
